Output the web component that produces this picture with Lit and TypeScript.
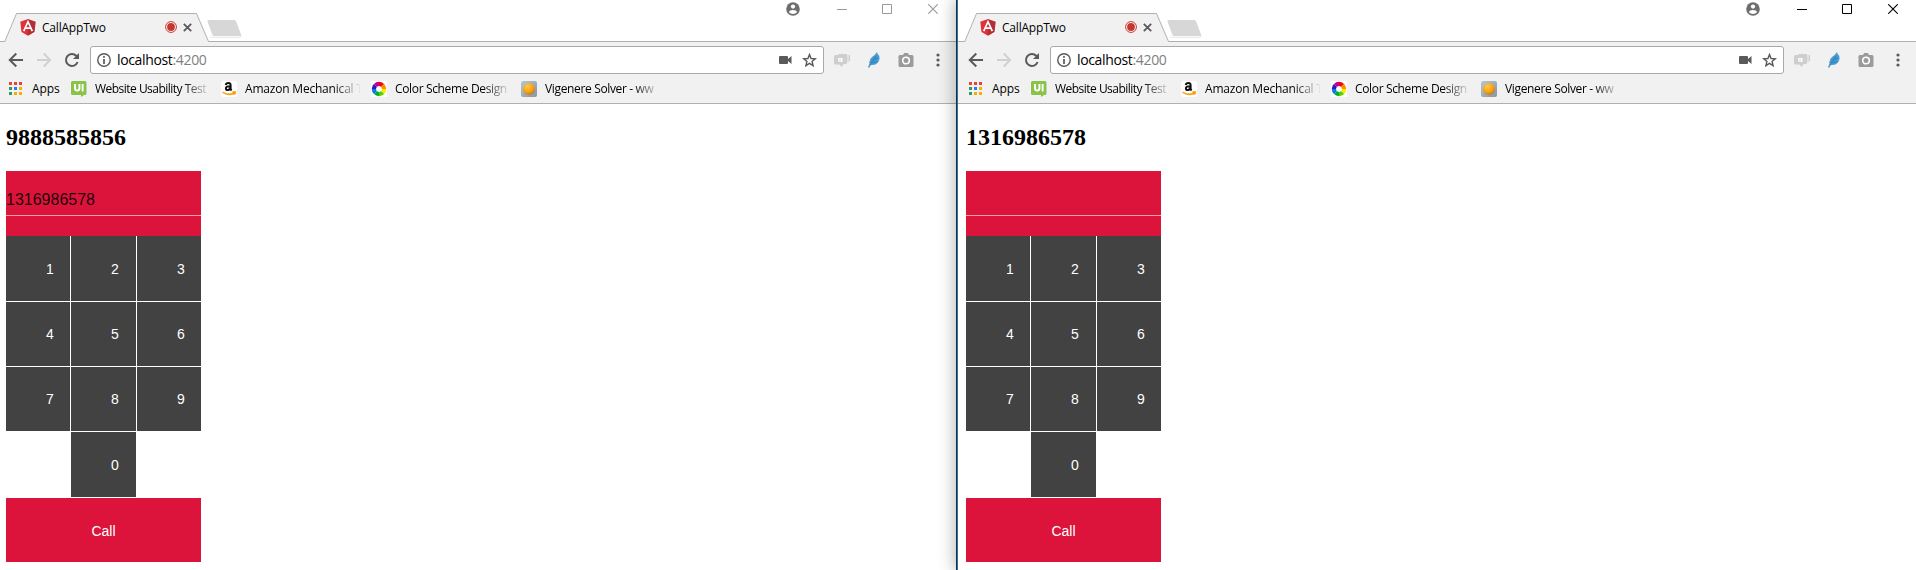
import { LitElement, html, svg, css } from "lit";
import { customElement, property } from "lit/decorators.js";

const favicon = {
  ui: svg`<svg width="16" height="17" viewBox="0 0 16 17"><path fill="#8bc34a" d="M1.500 1h12.500a1.500 1.500 0 0 1 1.500 1.500v11a1.500 1.500 0 0 1-1.500 1.500h-1l-3 2V15H1.500A1.500 1.500 0 0 1 0 13.500v-11A1.500 1.500 0 0 1 1.500 1z"/><path fill="none" stroke="#fff" stroke-width="1.900" d="M4 4v4.300q0 2.300 2.200 2.300t2.200-2.300V4M11.600 4v7.500"/></svg>`,
  amazon: svg`<svg width="16" height="16" viewBox="0 0 16 16"><rect width="16" height="16" rx="2.500" fill="#fff"/><path fill="none" stroke="#111" stroke-width="2" d="M4.700 3.900Q5.200 2 7.300 2q2.300 0 2.300 2.300v3.200q0 1 1 1.900M9.500 5.200Q4.900 5 4.900 7.300q0 1.900 1.800 1.800 2.300-.1 2.800-2.300"/><path fill="none" stroke="#f90" stroke-width="1.500" d="M1.500 11q5.800 4.200 12 1M11.400 11h2.900l-.7 2.800"/></svg>`,
  wheel: svg`<svg width="16" height="16" viewBox="0 0 16 16"><rect width="16" height="16" fill="#fff"/><g fill="none" stroke-width="4.300"><path stroke="#f40808" d="M8 2.900a5.100 5.100 0 0 1 3.600 1.500"/><path stroke="#ff8b00" d="M11.600 4.400A5.100 5.100 0 0 1 13.100 8"/><path stroke="#f3ef00" d="M13.100 8a5.100 5.100 0 0 1-1.500 3.600"/><path stroke="#55d300" d="M11.600 11.600A5.100 5.100 0 0 1 8 13.100"/><path stroke="#00ad32" d="M8 13.100a5.100 5.100 0 0 1-3.600-1.500"/><path stroke="#0877e8" d="M4.400 11.600A5.100 5.100 0 0 1 2.900 8"/><path stroke="#3518bd" d="M2.900 8a5.100 5.100 0 0 1 1.500-3.600"/><path stroke="#c00090" d="M4.400 4.400A5.100 5.100 0 0 1 8 2.900"/></g></svg>`,
  orb: svg`<svg width="16" height="16" viewBox="0 0 16 16"><defs><radialGradient id="o" cx=".38" cy=".3" r=".75"><stop offset="0" stop-color="#ffc94a"/><stop offset=".6" stop-color="#f5a31a"/><stop offset="1" stop-color="#c87408"/></radialGradient><linearGradient id="b" x2="1" y2="1"><stop stop-color="#b9c6d0"/><stop offset="1" stop-color="#8296a5"/></linearGradient></defs><rect width="16" height="16" rx="2" fill="url(#b)"/><circle cx="8" cy="8" r="6" fill="url(#o)"/></svg>`,
};

const bookmarks = [
  { icon: favicon.ui, label: "Website Usability Test" },
  { icon: favicon.amazon, label: "Amazon Mechanical T" },
  { icon: favicon.wheel, label: "Color Scheme Design" },
  { icon: favicon.orb, label: "Vigenere Solver - ww" },
];

@customElement("browser-chrome")
class BrowserChrome extends LitElement {
  @property({ type: Boolean }) active = false;

  static styles = css`
    :host { display: block; height: 104px; font-family: "Open Sans", "Noto Sans", sans-serif; color: #000; font-size: 12px; }
    svg { display: block; flex: none; }
    .strip { height: 42px; display: flex; box-sizing: border-box; background: linear-gradient(#b0b0b0, #b0b0b0) bottom / 100% 1px no-repeat #fff; }
    .tab { width: 207px; margin: 13px 0 0 6px; height: 29px; display: grid; }
    .tab > * { grid-area: 1 / 1; }
    .label { display: flex; align-items: center; padding: 0 19px 1px 16px; z-index: 1; }
    .title { margin-left: 6px; flex: 1; letter-spacing: -0.2px; font-size: 12px; line-height: 16px; padding-top: 1px; }
    .close { margin-left: 6px; }
    .newtab { margin: 20px 0 0 -4px; }
    .space { flex: 1; }
    .controls { display: flex; height: 18px; color: #999; align-items: center; padding-right: 18px; }
    .controls.active { color: #000; }
    .user { margin-right: 37px; }
    .min { margin-right: 35px; }
    .max { margin-right: 36px; }
    .tools { height: 61px; background: #f1f1f1; border-bottom: 1px solid #b0b0b0; }
    .nav { display: flex; align-items: center; padding: 4px 0 0 10px; height: 28px; }
    .fwd { margin-left: 12px; }
    .reload { margin-left: 12px; }
    .url { margin-left: 10px; width: 734px; height: 28px; box-sizing: border-box; border: 1px solid #a9a9a9; border-radius: 3px; background: #fff; display: flex; align-items: center; padding: 0 6px; }
    .address { font-size: 14px; letter-spacing: -0.35px; margin-left: 6px; flex: 1; line-height: 20px; }
    .port { color: #808080; }
    .star { margin-left: 10px; }
    .ext1 { margin-left: 10px; }
    .ext2 { margin-left: 18px; }
    .ext3 { margin-left: 18px; }
    .dots { margin-left: 22px; }
    .marks { display: flex; align-items: center; height: 29px; padding-left: 11px; white-space: nowrap; }
    .apps { display: flex; align-items: center; width: 62px; gap: 10px; letter-spacing: -0.1px; }
    .mark { display: flex; align-items: center; width: 150px; }
    .text { width: 116px; margin-left: 8px; line-height: 18px; letter-spacing: -0.35px; -webkit-mask-image: linear-gradient(90deg, #000 88px, transparent 116px); mask-image: linear-gradient(90deg, #000 88px, transparent 116px); }
    .mark:nth-child(2) .text { letter-spacing: -0.52px; }
    .mark:nth-child(3) .text { letter-spacing: -0.2px; }
  `;

  render() {
    return html`
      <div class="strip">
        <div class="tab">
          <svg width="207" height="29" viewBox="0 0 207 29"><path d="M0 29L1 28.500 12.500.5H192.500L204.500 28.500l1 .5z" fill="#f1f1f1"/><path d="M0 28.500H.8L12.500.5H192.500L204.500 28.500H207" fill="none" stroke="#b0b0b0"/></svg>
          <div class="label">
            <svg width="16" height="17" viewBox="0 0 16 17"><path fill="#dd3338" d="M8 0L.3 2.800l1.200 10.300L8 16.700z"/><path fill="#b52e31" d="M8 0l7.700 2.800-1.200 10.300L8 16.700z"/><path fill="none" stroke="#fff" stroke-width="1.700" d="M3.700 12.200L8 2.700l4.300 9.500M5.500 9.200h5"/></svg>
            <span class="title">CallAppTwo</span>
            <svg width="12" height="12" viewBox="0 0 12 12"><circle cx="6" cy="6" r="5.400" fill="#fff" stroke="#c5382b"/><circle cx="6" cy="6" r="3.900" fill="#c5382b"/></svg>
            <svg class="close" width="9" height="9" viewBox="0 0 9 9"><path d="M.8.8l7.400 7.400M8.200.8L.8 8.200" stroke="#5a5a5a" stroke-width="1.800"/></svg>
          </div>
        </div>
        <svg class="newtab" width="36" height="19" viewBox="0 0 36 19"><path d="M3 15.500l2 1.800h27.500l2-1.300" fill="none" stroke="#e4e4e4"/><path d="M1.500 0H27q1.500 0 2 1.200L34 14.500q.4 1.500-1 1.500H7.500Q6 16 5.300 14.500L.5 1.500Q0 0 1.500 0z" fill="#d7d7d7"/></svg>
        <div class="space"></div>
        <div class="controls ${this.active ? "active" : ""}">
          <svg class="user" width="14" height="14" viewBox="0 0 14 14"><circle cx="7" cy="7" r="6.800" fill="#6e6e6e"/><circle cx="7" cy="4.600" r="2.100" fill="#fff"/><path d="M2.800 10Q3.600 7.900 7 7.900t4.200 2.100Q9.600 12 7 12T2.800 10z" fill="#fff"/></svg>
          <svg class="min" width="10" height="10" viewBox="0 0 10 10"><path d="M0 5.500h10" stroke="currentColor"/></svg>
          <svg class="max" width="10" height="10" viewBox="0 0 10 10"><path d="M.5.500h9v9h-9z" fill="none" stroke="currentColor"/></svg>
          <svg width="10" height="10" viewBox="0 0 10 10"><path d="M.2.2l9.600 9.600M9.800.2L.2 9.800" stroke="currentColor" stroke-width="1.100"/></svg>
        </div>
      </div>
      <div class="tools">
        <div class="nav">
          <svg width="16" height="16" viewBox="0 0 16 16"><path d="M15 8H2M8.300 1.500L1.800 8l6.500 6.500" fill="none" stroke="#5a5a5a" stroke-width="2"/></svg>
          <svg class="fwd" width="16" height="16" viewBox="0 0 16 16"><path d="M1 8h13M7.700 1.500L14.200 8l-6.500 6.500" fill="none" stroke="#d0d0d0" stroke-width="1.800"/></svg>
          <svg class="reload" width="16" height="16" viewBox="0 0 16 16"><path d="M13.600 10A6 6 0 1 1 12.300 3.800L13.500 5" fill="none" stroke="#5a5a5a" stroke-width="2"/><path d="M15 1v6H9z" fill="#5a5a5a"/></svg>
          <div class="url">
            <svg width="14" height="14" viewBox="0 0 14 14"><circle cx="7" cy="7" r="6.200" fill="none" stroke="#5a5a5a" stroke-width="1.400"/><path d="M7 3v1.700M7 6v5" stroke="#5a5a5a" stroke-width="1.700"/></svg>
            <span class="address">localhost<span class="port">:4200</span></span>
            <svg width="13" height="8" viewBox="0 0 13 8"><path d="M1 0h7q1 0 1 1v2l3.500-3v8L9 5v2q0 1-1 1H1Q0 8 0 7V1q0-1 1-1z" fill="#5a5a5a"/></svg>
            <svg class="star" width="15" height="14" viewBox="0 0 15 14"><path d="M7.500 1.500l1.600 4 4.200.3-3.200 2.700 1 4.200-3.600-2.300-3.600 2.300 1-4.200L1.700 5.800l4.200-.3z" fill="none" stroke="#5a5a5a" stroke-width="1.400"/></svg>
          </div>
          <svg class="ext1" width="16" height="13" viewBox="0 0 16 13"><path d="M1.500 1H4l1-1h7q1 0 1 1v8q0 1-1 1H9.500L7.500 13 5.500 10.500h-4Q0 10.500 0 9V2.500Q0 1 1.500 1z" fill="#cecece"/><path d="M14 1.200v7M15.500 1v6" stroke="#cecece"/><circle cx="6" cy="5.800" r="1.500" fill="none" stroke="#fff" stroke-width="1.300"/><path d="M8 4v4" stroke="#fff"/></svg>
          <svg class="ext2" width="12" height="16" viewBox="0 0 12 16"><path d="M9 0q.3 2 2 3.500 1.500 4-1 7Q7.500 13.500 3 13L1 16 0 15l1.500-3Q.5 8 4 5 7.500 2.500 9 0z" fill="#4a9bd4"/><path d="M2 13Q4 9 8 4M4 11l5-1.500M5 8l4.500-2" fill="none" stroke="#2478ae" stroke-width=".8"/></svg>
          <svg class="ext3" width="16" height="14" viewBox="0 0 16 14"><path d="M2 2h3l1.200-2h3.600L11 2h3q1.500 0 1.500 1.500v9Q15.500 14 14 14H2Q.5 14 .5 12.500v-9Q.5 2 2 2z" fill="#9b9b9b"/><circle cx="8" cy="7.500" r="3.300" fill="none" stroke="#fff" stroke-width="1.600"/></svg>
          <svg class="dots" width="4" height="14" viewBox="0 0 4 14"><g fill="#5a5a5a"><circle cx="2" cy="2" r="1.600"/><circle cx="2" cy="7" r="1.600"/><circle cx="2" cy="12" r="1.600"/></g></svg>
        </div>
        <div class="marks">
          <div class="apps">
            <svg width="13" height="13" viewBox="0 0 13 13"><path fill="#ea4335" d="M0 0h3v3H0zM5 0h3v3H5zM10 0h3v3h-3z"/><path fill="#34995a" d="M0 5h3v3H0zM0 10h3v3H0z"/><path fill="#1a84f0" d="M5 5h3v3H5z"/><path fill="#fbaa0a" d="M10 5h3v3h-3zM5 10h3v3H5zM10 10h3v3h-3z"/></svg>
            <span>Apps</span>
          </div>
          ${bookmarks.map((b) => html`<div class="mark">${b.icon}<span class="text">${b.label}</span></div>`)}
        </div>
      </div>
    `;
  }
}

@customElement("call-page")
class CallPage extends LitElement {
  @property() own = "";
  @property() dialed = "";

  static styles = css`
    :host { display: block; padding: 20px 8px 0; font-family: "Liberation Sans", Arial, sans-serif; color: #fff; font-size: 14px; }
    h2 { font: bold 24px/27px "Liberation Serif", "Times New Roman", serif; color: #000; margin: 0 0 20px; }
    .screen { width: 195px; height: 65px; box-sizing: border-box; background: #dc143c; padding-top: 18px; }
    .entry { height: 26px; padding: 0; border-bottom: 1px solid #f3a1b1; color: rgba(0, 0, 0, 0.87); font-size: 16px; line-height: 22px; }
    .pad { width: 195px; display: grid; grid-template-columns: 64px 65px 64px; grid-template-rows: 65px 64px 64px 65px 64px; gap: 1px; }
    .key { background: #424242; display: flex; align-items: center; padding: 0 0 0 40px; }
    .zero { grid-column: 2; }
    .call { grid-column: 1 / -1; background: #dc143c; display: flex; align-items: center; justify-content: center; padding: 2px 0 0; }
  `;

  render() {
    return html`
      <h2>${this.own}</h2>
      <div class="screen"><div class="entry">${this.dialed}</div></div>
      <div class="pad">
        ${[1, 2, 3, 4, 5, 6, 7, 8, 9].map((n) => html`<div class="key">${n}</div>`)}
        <div class="key zero">0</div>
        <div class="call">Call</div>
      </div>
    `;
  }
}

@customElement("app-root")
class AppRoot extends LitElement {
  static styles = css`
    :host { display: flex; width: 1916px; height: 570px; overflow: hidden; background: #fff; }
    .window { width: 958px; height: 570px; flex: none; background: #fff; }
    .back { margin-left: -2px; }
    .front { border-left: 1px solid #1b78b8; box-shadow: -1px 0 #2b2b2b, -1px 0 16px 1px rgba(0, 0, 0, 0.3); margin-left: 1px; z-index: 1; }
  `;

  render() {
    return html`
      <div class="window back">
        <browser-chrome></browser-chrome>
        <call-page own="9888585856" dialed="1316986578"></call-page>
      </div>
      <div class="window front">
        <browser-chrome active></browser-chrome>
        <call-page own="1316986578"></call-page>
      </div>
    `;
  }
}
